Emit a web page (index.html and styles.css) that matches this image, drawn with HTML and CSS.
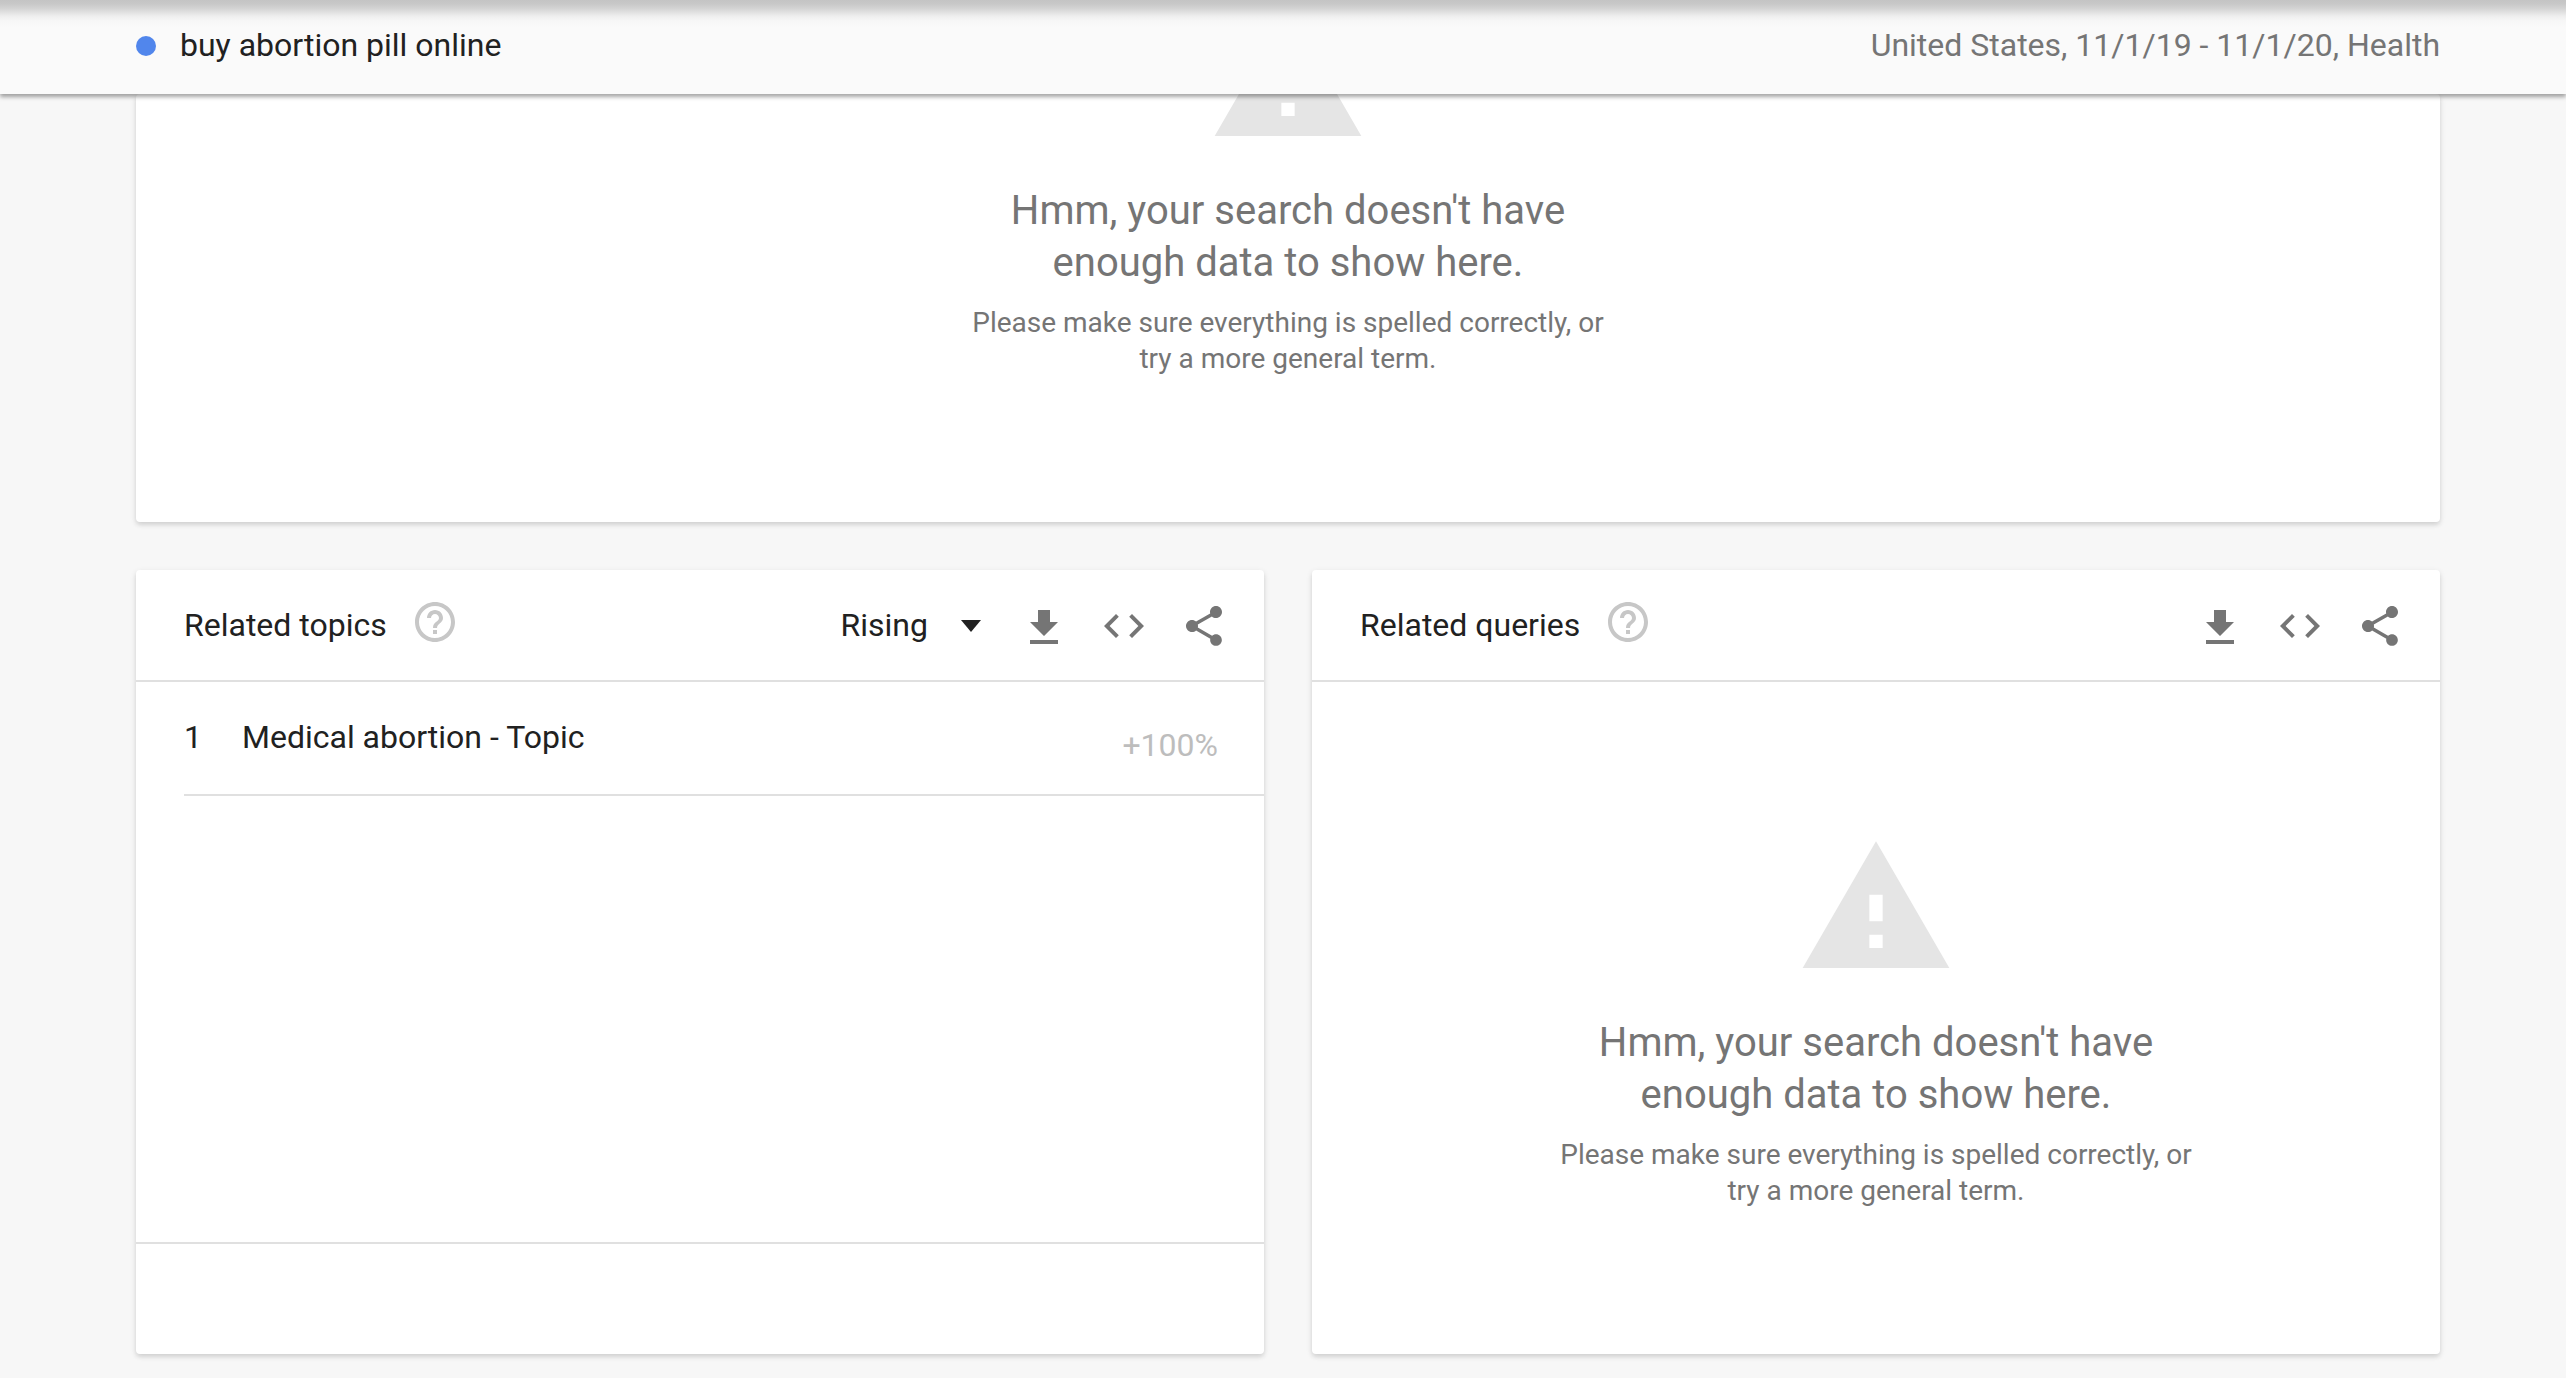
FILE: index.html
```html
<!DOCTYPE html>
<html lang="en">
<head>
<meta charset="utf-8">
<title>buy abortion pill online - Explore</title>
<link rel="stylesheet" href="styles.css">
</head>
<body>
<svg class="sprite" aria-hidden="true">
  <symbol id="warning" viewBox="0 0 24 24"><path d="M1 21h22L12 2 1 21zm12-3h-2v-2h2v2zm0-4h-2v-4h2v4z"/></symbol>
  <symbol id="help" viewBox="0 0 24 24"><path d="M11 18h2v-2h-2v2zm1-16C6.48 2 2 6.48 2 12s4.48 10 10 10 10-4.480 10-10S17.520 2 12 2zm0 18c-4.410 0-8-3.590-8-8s3.590-8 8-8 8 3.590 8 8-3.590 8-8 8zm0-14c-2.210 0-4 1.790-4 4h2c0-1.100.9-2 2-2s2 .9 2 2c0 2-3 1.750-3 5h2c0-2.250 3-2.500 3-5 0-2.210-1.790-4-4-4z"/></symbol>
  <symbol id="download" viewBox="0 -1 24 24"><path d="M19 9h-4V3H9v6H5l7 7 7-7zM5 18v2h14v-2H5z"/></symbol>
  <symbol id="embed" viewBox="0 0 24 24"><path d="M9.400 16.600L4.800 12l4.600-4.600L8 6l-6 6 6 6 1.400-1.400zm5.200 0l4.600-4.600-4.600-4.600L16 6l6 6-6 6-1.400-1.400z"/></symbol>
  <symbol id="share" viewBox="0 0 24 24"><path d="M18 16.080c-.76 0-1.440.3-1.960.77L8.910 12.700c.05-.23.09-.46.09-.7s-.04-.47-.09-.7l7.050-4.110c.54.5 1.250.81 2.040.81 1.660 0 3-1.340 3-3s-1.340-3-3-3-3 1.340-3 3c0 .24.040.47.090.7L8.040 9.810C7.500 9.310 6.790 9 6 9c-1.660 0-3 1.340-3 3s1.340 3 3 3c.79 0 1.500-.31 2.040-.81l7.120 4.160c-.05.21-.08.43-.08.65 0 1.610 1.310 2.920 2.920 2.920s2.920-1.310 2.920-2.920-1.310-2.920-2.920-2.920z"/></symbol>
</svg>

<header class="topbar">
  <div class="term"><span class="dot"></span><span>buy abortion pill online</span></div>
  <div class="filters">United States, 11/1/19 - 11/1/20, Health</div>
</header>

<main class="content">
  <section class="card card-wide">
    <div class="empty">
      <svg class="empty-icon"><use href="#warning"/></svg>
      <p class="empty-title">Hmm, your search doesn't have<br>enough data to show here.</p>
      <p class="empty-text">Please make sure everything is spelled correctly, or<br>try a more general term.</p>
    </div>
  </section>

  <div class="columns">
    <section class="card card-half">
      <div class="card-head">
        <h2>Related topics</h2>
        <svg class="icon help"><use href="#help"/></svg>
        <div class="select"><span>Rising</span><svg class="caret" viewBox="0 0 20 12"><path d="M0 0h20L10 12z"/></svg></div>
        <div class="actions">
          <svg class="icon"><use href="#download"/></svg>
          <svg class="icon"><use href="#embed"/></svg>
          <svg class="icon"><use href="#share"/></svg>
        </div>
      </div>
      <div class="row">
        <span class="rank">1</span>
        <span class="label">Medical abortion - Topic</span>
        <span class="value">+100%</span>
      </div>
      <div class="card-foot"></div>
    </section>

    <section class="card card-half">
      <div class="card-head">
        <h2>Related queries</h2>
        <svg class="icon help"><use href="#help"/></svg>
        <div class="actions">
          <svg class="icon"><use href="#download"/></svg>
          <svg class="icon"><use href="#embed"/></svg>
          <svg class="icon"><use href="#share"/></svg>
        </div>
      </div>
      <div class="empty">
        <svg class="empty-icon"><use href="#warning"/></svg>
        <p class="empty-title">Hmm, your search doesn't have<br>enough data to show here.</p>
        <p class="empty-text">Please make sure everything is spelled correctly, or<br>try a more general term.</p>
      </div>
    </section>
  </div>
</main>
</body>
</html>
```
FILE: styles.css
```css
* { box-sizing: border-box; }

body {
  margin: 0;
  height: 1378px;
  overflow: hidden;
  display: flex;
  flex-direction: column;
  background: #f7f7f7;
  color: #212121;
  font: 32px/40px Roboto, sans-serif;
}

h2, p { margin: 0; font-weight: 400; }
h2 { font-size: inherit; }

svg { display: block; flex: none; fill: currentColor; }
.sprite { position: absolute; width: 0; height: 0; }

.topbar {
  position: relative;
  z-index: 1;
  flex: none;
  height: 94px;
  padding: 0 126px 4px 136px;
  display: flex;
  align-items: center;
  justify-content: space-between;
  background: linear-gradient(#c4c4c4 0, #c8c8c8 4px, #d2d2d2 8px, #e0e0e0 12px, #eee 16px, #f7f7f7 21px, #fafafa 27px);
  box-shadow: 0 3px 4px rgba(0, 0, 0, .35);
}
.term { display: flex; align-items: center; gap: 24px; }
.dot { width: 20px; height: 20px; margin-top: 2px; border-radius: 50%; background: #5186ec; }
.filters { color: #757575; }

.content {
  padding: 0 126px 0 136px;
  display: flex;
  flex-direction: column;
  gap: 48px;
}
.card {
  display: flex;
  flex-direction: column;
  background: #fff;
  border-radius: 4px;
  box-shadow: 0 2px 6px rgba(0, 0, 0, .1), 0 3px 4px rgba(0, 0, 0, .08);
}
.card-wide { height: 428px; }
.card-wide .empty { margin-top: -98px; }
.columns { display: grid; grid-template-columns: 1fr 1fr; gap: 48px; }
.card-half { height: 784px; }
.card-half .empty { margin-top: 146px; }

.card-head {
  flex: none;
  height: 112px;
  padding: 0 36px 0 48px;
  display: flex;
  align-items: center;
  border-bottom: 2px solid #e0e0e0;
}
.icon { width: 48px; height: 48px; }
.help { margin: 0 0 6px 24px; color: #c7c7c7; }
.select { display: flex; align-items: center; gap: 33px; margin-left: auto; }
.caret { width: 20px; height: 12px; margin-top: 2px; }
.actions { display: flex; gap: 32px; margin: 2px 0 0 auto; color: #757575; }
.select + .actions { margin-left: 39px; }

.row {
  height: 114px;
  margin-left: 48px;
  padding: 0 46px 2px 0;
  display: flex;
  align-items: center;
  border-bottom: 2px solid #e0e0e0;
}
.rank { width: 58px; }
.value { margin: 16px 0 0 auto; color: #bdbdbd; }
.card-foot { height: 112px; margin-top: auto; border-top: 2px solid #e0e0e0; }

.empty {
  display: flex;
  flex-direction: column;
  align-items: center;
  text-align: center;
  color: #757575;
}
.empty-icon { width: 160px; height: 160px; color: #e5e5e5; }
.empty-title { margin-top: 29px; font-size: 40px; line-height: 52px; }
.empty-text { margin-top: 16px; font-size: 28px; line-height: 36px; }
```
